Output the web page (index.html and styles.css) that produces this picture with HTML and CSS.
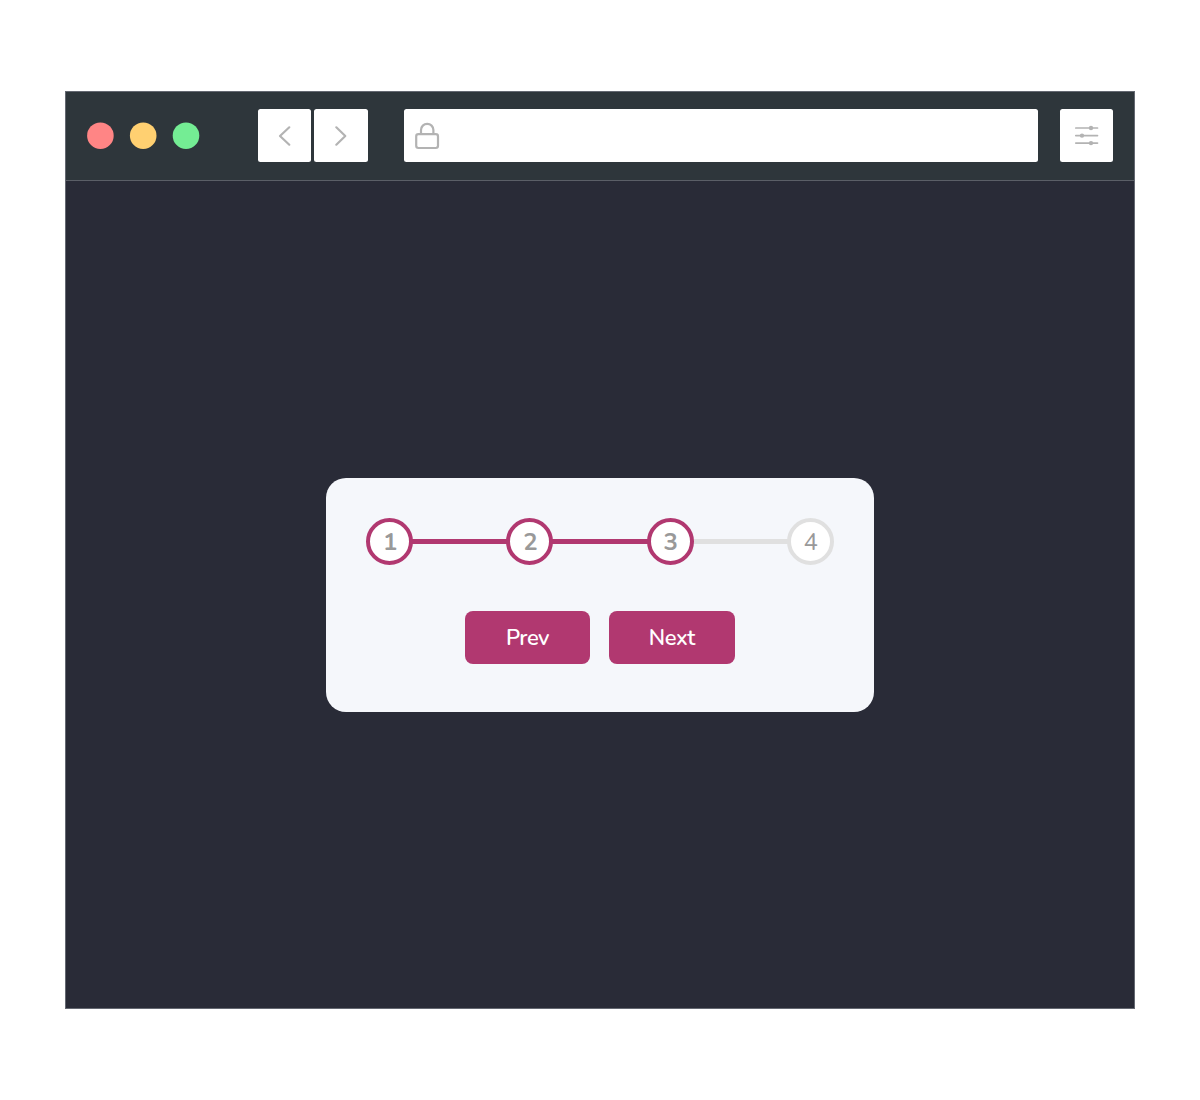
FILE: index.html
```html
<!DOCTYPE html>
<html lang="en">
<head>
<meta charset="utf-8">
<title>Progress steps</title>
<link rel="stylesheet" href="styles.css">
</head>
<body>
<div class="window">
  <header class="toolbar">
    <div class="lights">
      <svg width="114" height="28" viewBox="0 0 114 28"><circle class="red" cx="13.4" cy="13.7" r="13.3"/><circle class="yellow" cx="56.2" cy="13.7" r="13.3"/><circle class="green" cx="99" cy="13.7" r="13.3"/></svg>
    </div>
    <div class="nav">
      <div class="tool"><svg width="53" height="53" viewBox="0 0 53 53"><path d="M31.3 18.3 22 27l9.3 8.7"/></svg></div>
      <div class="tool"><svg width="53" height="53" viewBox="0 0 53 53"><path d="M22.3 18.3 31.3 27l-9 8.7"/></svg></div>
    </div>
    <div class="address">
      <svg width="46" height="53" viewBox="0 0 46 53"><rect x="12.2" y="25.2" width="21.8" height="13.8" rx="2.2"/><path d="M17 25V21a6.2 6.2 0 0 1 12.4 0V25"/></svg>
    </div>
    <div class="tool"><svg class="sliders" width="53" height="53" viewBox="0 0 53 53"><path d="M15.8 19H37.5M15.8 26.6H37.5M15.8 34.1H37.5"/><circle cx="31" cy="19" r="2.2"/><circle cx="22" cy="26.6" r="2.2"/><circle cx="31" cy="34.1" r="2.2"/></svg></div>
  </header>
  <main class="page">
    <section class="card">
      <div class="steps">
        <div class="circle active">1</div>
        <div class="line active"></div>
        <div class="circle active">2</div>
        <div class="line active"></div>
        <div class="circle active">3</div>
        <div class="line"></div>
        <div class="circle">4</div>
      </div>
      <div class="actions">
        <button class="btn prev">Prev</button>
        <button class="btn next">Next</button>
      </div>
    </section>
  </main>
</div>
</body>
</html>
```
FILE: styles.css
```css
* { box-sizing: border-box; }
body {
  margin: 0;
  padding: 91px 65px 0;
  height: 1100px;
  background: #fff;
  font-family: Nunito, "Noto Sans", sans-serif;
}
.window {
  width: 1070px;
  height: 918px;
  display: flex;
  flex-direction: column;
  border: 1px solid #646871;
  background: #292b37;
}
.toolbar {
  height: 89px;
  flex: none;
  display: flex;
  align-items: flex-start;
  padding: 17px 21px 0 20.7px;
  background: #2e363b;
  border-bottom: 1px solid #5b5f67;
}
.lights { width: 171.3px; padding-top: 13px; }
.lights circle { stroke: none; }
.red { fill: #ff8585; }
.yellow { fill: #ffd071; }
.green { fill: #74ed94; }
.nav { display: flex; gap: 3px; margin-right: 36.5px; }
.tool {
  width: 53.3px;
  height: 53.4px;
  border-radius: 2.5px;
  background: #fff;
}
.address {
  flex: 1;
  height: 53.4px;
  margin-right: 21.5px;
  border-radius: 2.5px;
  background: #fff;
}
svg {
  display: block;
  fill: none;
  stroke: #b3b3b3;
  stroke-width: 2.2;
  stroke-linecap: round;
  stroke-linejoin: round;
}
.sliders { stroke-width: 1.7; }
.sliders circle { fill: #b3b3b3; stroke: none; }
.page {
  flex: 1;
  display: flex;
  align-items: center;
  justify-content: center;
}
.card {
  width: 547.6px;
  height: 234px;
  padding: 40px;
  border-radius: 20px;
  background: #f5f7fb;
}
.steps { display: flex; align-items: center; }
.circle {
  flex: none;
  z-index: 1;
  width: 47px;
  height: 47px;
  padding: 2px 0 0 1px;
  display: flex;
  align-items: center;
  justify-content: center;
  border: 4px solid #e0e0e0;
  border-radius: 50%;
  background: #fff;
  color: #999;
  font-size: 24px;
}
.circle.active { border-color: #b13870; font-weight: 700; }
.line { flex: 1; height: 5px; margin: 0 -1px; background: #e0e0e0; }
.line.active { background: #b13870; }
.actions { display: flex; justify-content: center; gap: 18.5px; margin-top: 46.5px; }
.btn {
  height: 53px;
  padding: 2px 0 0;
  border: 0;
  border-radius: 8px;
  background: #b13870;
  color: #fff;
  font: 600 22px/51px Nunito, "Noto Sans", sans-serif;
  letter-spacing: -0.5px;
}
.prev { width: 125px; }
.next { width: 126.5px; }
```
